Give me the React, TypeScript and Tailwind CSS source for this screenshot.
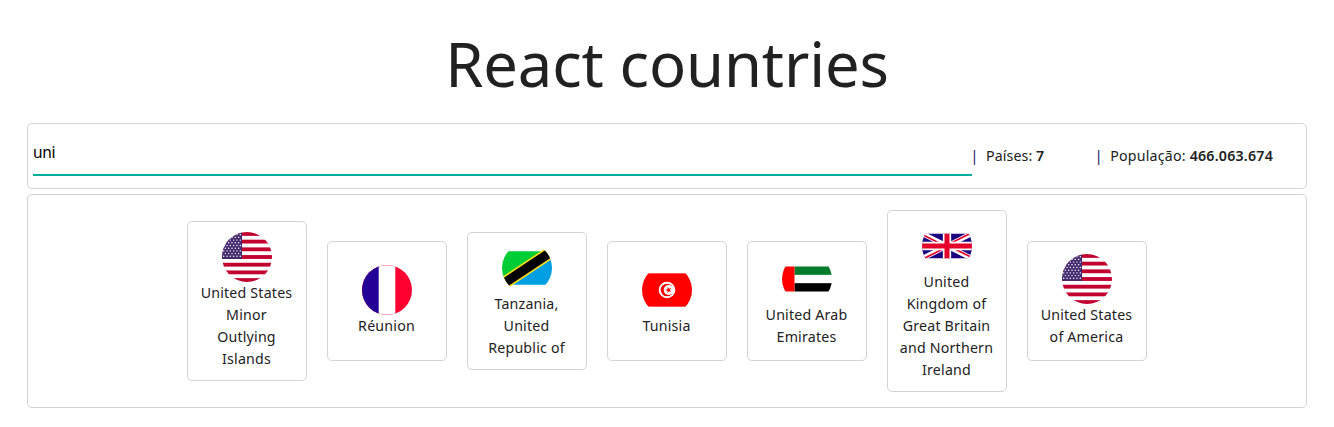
import { useState, type ReactNode } from 'react';

function UsaFlag() {
  const stars: ReactNode[] = [];
  for (let row = 0; row < 9; row++) {
    const count = row % 2 === 0 ? 6 : 5;
    for (let col = 0; col < count; col++) {
      const x = 1.7 + col * 3.32 + (row % 2 === 0 ? 0 : 1.66);
      stars.push(<circle key={`${row}-${col}`} cx={x} cy={2.7 + row * 2.7} r={0.72} fill="#fff" />);
    }
  }
  return (
    <>
      <rect width="50" height="50" fill="#fff" />
      {[0, 2, 4, 6, 8, 10, 12].map((i) => (
        <rect key={i} y={(i * 50) / 13} width="50" height={50 / 13} fill="#c1002f" />
      ))}
      <rect width="20" height="26.92" fill="#452c70" />
      {stars}
    </>
  );
}

function ReunionFlag() {
  return (
    <>
      <rect width="50" height="50" fill="#ff0031" />
      <rect width="17" height="50" fill="#230096" />
      <rect x="16.7" y="0.3" width="16.6" height="49.4" fill="#fff" />
    </>
  );
}

function TanzaniaFlag() {
  return (
    <g transform="translate(0 8.33)">
      <path d="M0 0H50L0 33.34Z" fill="#00cd35" />
      <path d="M50 0V33.34H0Z" fill="#009fe3" />
      <path d="M1 32.67L49 0.67" stroke="#ffdd18" strokeWidth="12.6" strokeLinecap="square" />
      <path d="M1 32.67L49 0.67" stroke="#000" strokeWidth="9.4" strokeLinecap="square" />
    </g>
  );
}

function TunisiaFlag() {
  return (
    <>
      <rect y="8.33" width="50" height="33.34" fill="#ff0000" />
      <circle cx="25" cy="25" r="8.3" fill="#fff" />
      <circle cx="25" cy="25" r="6.3" fill="#ff0000" />
      <circle cx="26.7" cy="25" r="5" fill="#fff" />
      <path
        d="M23.2 25L25.5 24.25V21.8L26.95 23.75L29.3 23L27.85 25L29.3 27L26.95 26.25L25.5 28.2V25.75Z"
        fill="#ff0000"
      />
    </>
  );
}

function EmiratesFlag() {
  return (
    <>
      <rect y="12.5" width="50" height="25" fill="#fff" />
      <rect x="12.5" y="12.5" width="37.5" height="8.33" fill="#007a2b" />
      <rect x="12.5" y="29.17" width="37.5" height="8.33" fill="#000" />
      <rect y="12.5" width="12.5" height="25" fill="#ff0000" />
    </>
  );
}

function BritainFlag() {
  return (
    <svg y="12.5" width="50" height="25" viewBox="0 0 60 30">
      <rect width="60" height="30" fill="#1b0080" />
      <path d="M0 0L60 30M60 0L0 30" stroke="#fff" strokeWidth="6" />
      <path
        d="M0 0L30 15H25.5L0 2.24ZM60 30L30 15H34.5L60 27.76ZM60 0L30 15H25.5L55.5 0ZM0 30L30 15H34.5L4.5 30Z"
        fill="#e4002b"
      />
      <path d="M30 0V30M0 15H60" stroke="#fff" strokeWidth="10" />
      <path d="M30 0V30M0 15H60" stroke="#e4002b" strokeWidth="6" />
    </svg>
  );
}

const countries: { id: string; lines: string[]; flag: ReactNode }[] = [
  { id: 'UMI', lines: ['United States', 'Minor', 'Outlying', 'Islands'], flag: <UsaFlag /> },
  { id: 'REU', lines: ['Réunion'], flag: <ReunionFlag /> },
  { id: 'TZA', lines: ['Tanzania,', 'United', 'Republic of'], flag: <TanzaniaFlag /> },
  { id: 'TUN', lines: ['Tunisia'], flag: <TunisiaFlag /> },
  { id: 'ARE', lines: ['United Arab', 'Emirates'], flag: <EmiratesFlag /> },
  {
    id: 'GBR',
    lines: ['United', 'Kingdom of', 'Great Britain', 'and Northern', 'Ireland'],
    flag: <BritainFlag />,
  },
  { id: 'USA', lines: ['United States', 'of America'], flag: <UsaFlag /> },
];

function CountryCard({ lines, flag }: { lines: string[]; flag: ReactNode }) {
  return (
    <div className="flex min-h-[120px] w-[120px] flex-col items-center justify-center rounded-[5px] border border-[#d3d3d3] p-2.5">
      <svg className="size-[50px] shrink-0 rounded-full" viewBox="0 0 50 50">
        {flag}
      </svg>
      <div className="mr-px text-center text-[14.2px] leading-[22px] tracking-[0.2px] whitespace-nowrap">
        {lines.map((line) => (
          <div key={line}>{line}</div>
        ))}
      </div>
    </div>
  );
}

export default function App() {
  const [filter, setFilter] = useState('uni');

  return (
    <div className="min-h-[427px] bg-white px-[27px] pt-[25px] font-['Noto_Sans','Open_Sans',sans-serif] text-[#212121]">
      <h1 className="mb-[21px] text-center text-[61.5px] leading-[77px] font-normal tracking-[-0.12px]">
        React countries
      </h1>
      <div className="flex h-[66px] items-start rounded-[5px] border border-[#d3d3d3] pr-[33px] pl-[5px]">
        <input
          type="text"
          value={filter}
          onChange={(event) => setFilter(event.target.value)}
          className="mt-[5px] h-[47px] w-[939px] border-b-2 border-[#00ac9b] bg-transparent p-0 text-[15.5px] tracking-[-0.3px] text-black outline-none"
        />
        <div className="flex flex-1 items-baseline pt-[21px] text-[14.2px] leading-[22px] whitespace-nowrap">
          <span className="-ml-[1.4px] w-[15.4px] text-[#1a1050]">|</span>
          <span className="tracking-[0.1px]">
            Países: <strong className="font-semibold">7</strong>
          </span>
          <span className="ml-auto w-[15.4px] text-[#1a1050]">|</span>
          <span className="tracking-[0.22px]">
            População: <strong className="font-semibold">466.063.674</strong>
          </span>
        </div>
      </div>
      <div className="mt-[5px] flex h-[214px] items-center justify-center gap-5 rounded-[5px] border border-[#d3d3d3]">
        {countries.map((country) => (
          <CountryCard key={country.id} lines={country.lines} flag={country.flag} />
        ))}
      </div>
    </div>
  );
}
